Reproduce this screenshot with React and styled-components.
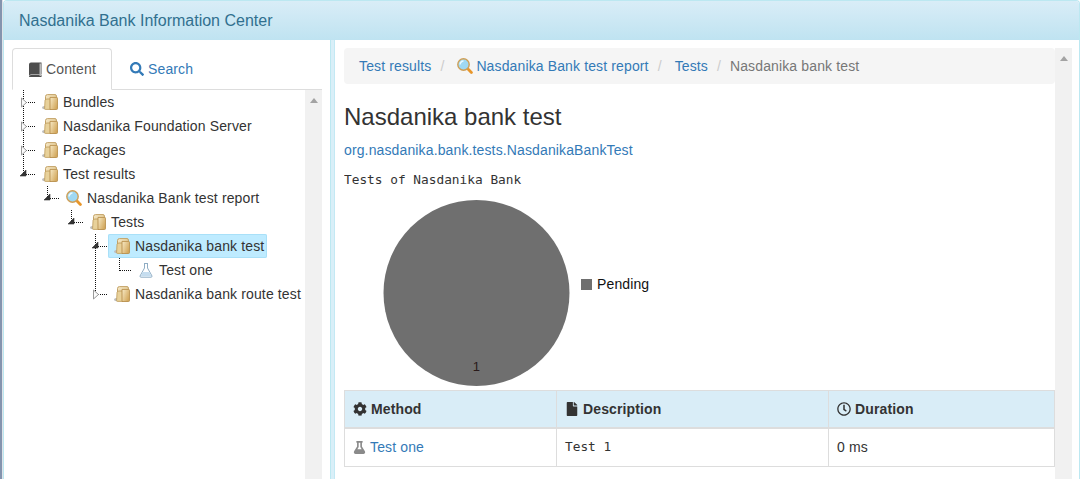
import React from "react";
import styled, { createGlobalStyle } from "styled-components";
import { FaSearch, FaCog, FaFile, FaRegClock, FaFlask } from "react-icons/fa";

const Global = createGlobalStyle`
  html, body { margin: 0; padding: 0; background: #fff; overflow: hidden; }
  * { box-sizing: border-box; }
  body { font-family: "Liberation Sans", Arial, sans-serif; font-size: 14px; line-height: 20px; color: #333; letter-spacing: 0.13px; }
`;

const Page = styled.div`
  width: 1081px; height: 479px; overflow: hidden; display: flex; background: #fff;
`;
const EdgeStrip = styled.div`
  width: 3px; flex: none;
  background: linear-gradient(to right, #8494ae 0, #8494ae 2px, #dfe3e8 2px);
`;
const Frame = styled.div`
  width: 1077px; flex: none; display: flex; flex-direction: column;
  border: 1px solid #bce8f1; border-bottom: 0; border-radius: 4px 4px 0 0; overflow: hidden;
`;
const Header = styled.header`
  height: 39px; flex: none; padding: 0 15px; display: flex; align-items: center;
  font-size: 16px; color: #31708f; letter-spacing: 0;
  background-image: linear-gradient(to bottom, #d9edf7 0, #bfe3f1 100%);
`;
const Body = styled.div`
  flex: 1; display: flex; min-height: 0;
`;
const LeftPane = styled.aside`
  width: 326px; flex: none; padding: 8px 8px 0 8px; display: flex; flex-direction: column;
`;
const Tabs = styled.nav`
  display: flex; height: 42px; flex: none; border-bottom: 1px solid #ddd;
`;
const Tab = styled.div`
  height: 42px; padding: 0 ${p => (p.$active ? "15px" : "18px")};
  display: flex; align-items: center; gap: 4px; font-size: 14px;
  color: ${p => (p.$active ? "#555" : "#337ab7")};
  ${p => p.$active && `
    width: 100px;
    background: #fff; border: 1px solid #ddd; border-bottom-color: #fff; border-radius: 4px 4px 0 0;
  `}
`;
const TreeWrap = styled.div`
  flex: 1; display: flex; min-height: 0;
`;
const Tree = styled.div`
  width: 293px; flex: none; overflow: hidden;
`;
const Scrollbar = styled.div`
  width: 17px; flex: none; background: #f1f1f1; display: flex; justify-content: center; padding-top: 8px;
`;
const ArrowUp = styled.div`
  width: 0; height: 0; border-left: 4px solid transparent; border-right: 4px solid transparent;
  border-bottom: 5px solid #a3a3a3;
`;
const Row = styled.div`
  height: 24px; display: flex; align-items: stretch; white-space: nowrap;
`;
const Cell = styled.svg`
  width: 24px; height: 24px; flex: none; display: block;
`;
const Anchor = styled.div`
  height: 24px; padding: 0 3px 0 6px; display: flex; align-items: center; gap: 5px; color: #333;
  border-radius: 2px;
  ${p => p.$selected && `background: #beebff; box-shadow: inset 0 0 0 1px #a9e0f8;`}
`;
const Splitter = styled.div`
  width: 5px; flex: none; background: #d9eff8; border-left: 1px solid #bce8f1; border-right: 1px solid #c4e9f4;
`;
const MainPane = styled.main`
  flex: 1; min-width: 0; display: flex; padding: 8px 6px 0 9px;
`;
const Content = styled.div`
  width: 711px; flex: none; overflow: hidden;
`;
const Breadcrumb = styled.ol`
  margin: 0 0 20px; padding: 8px 15px 8px 11px; height: 36px; list-style: none; display: flex; align-items: center;
  background: #f5f5f5; border-radius: 4px;
`;
const Crumb = styled.li`
  display: flex; align-items: center; gap: 3px;
  padding-left: ${p => (p.$current ? "0" : "4px")};
  color: ${p => (p.$current ? "#777" : "#337ab7")};
`;
const CrumbSep = styled.li`
  width: 22px; flex: none; padding-left: 9px; color: #ccc;
`;
const Title = styled.h2`
  margin: 0; font-size: 24px; font-weight: 500; line-height: 26px; color: #333; letter-spacing: 0;
`;
const QualifiedName = styled.a`
  display: block; margin-top: 10px; color: #337ab7; line-height: 20px;
`;
const Mono = styled.span`
  font-family: "DejaVu Sans Mono", monospace; font-size: 12.8px; color: #333; letter-spacing: 0;
`;
const Intro = styled.div`
  margin-top: 9px; height: 20px; line-height: 20px;
`;
const ChartRow = styled.div`
  height: 201px; display: flex; align-items: flex-start; padding: 10px 0 0 38px;
`;
const LegendItem = styled.div`
  display: flex; align-items: center; gap: 5px; margin: 75px 0 0 11px; color: #111;
`;
const LegendSwatch = styled.span`
  width: 11px; height: 11px; background: #6f6f6f; display: block;
`;
const Table = styled.table`
  width: 711px; border-collapse: separate; border-spacing: 0; table-layout: fixed; border: 1px solid #ddd;
`;
const Th = styled.th`
  width: ${p => p.$w}px; height: 37px; padding: 8px; text-align: left; font-weight: 700; color: #333;
  background: #d9edf7; border-bottom: 2px solid #ddd; white-space: nowrap;
  & + & { border-left: 1px solid #ddd; }
  svg { vertical-align: -2px; margin-right: 4px; }
`;
const Td = styled.td`
  height: 37px; padding: 7px 8px 9px; color: #333;
  & + & { border-left: 1px solid #ddd; }
`;
const Link = styled.a`
  color: #337ab7; svg { color: #8a8a8a; vertical-align: -2px; margin-right: 4px; }
`;
const Spacer = styled.span`
  width: ${p => p.$n * 24}px; flex: none; display: block;
`;

/* Tree connector for one indentation level */
const Connector = ({ kind, toggle }) => {
  const x = 11.5, y = 12.5;
  const dots = { stroke: "#111", strokeDasharray: "1 1", fill: "none", shapeRendering: "crispEdges" };
  return (
    <Cell viewBox="0 0 24 24">
      {kind === "guide" && <path d={`M${x} 0V24`} {...dots} />}
      {kind === "branch" && <path d={`M${x} 0V24`} {...dots} />}
      {kind === "end" && <path d={`M${x} 0V13`} {...dots} />}
      {(kind === "branch" || kind === "end") && <path d={`M12 ${y}H24`} {...dots} />}
      {toggle === "closed" && <path d="M9.5 8L14.5 12.5L9.5 17Z" fill="#fbfbfb" stroke="#999" strokeLinejoin="miter" />}
      {toggle === "open" && <path d="M14 8L14 14L8 14Z" fill="#333" stroke="#333" strokeWidth="0.6" />}
    </Cell>
  );
};

const FolderIcon = () => (
  <svg width="16" height="16" viewBox="0 0 16 16" style={{ flex: "none" }}>
    <defs>
      <linearGradient id="folderFront" x1="0" y1="0" x2="1" y2="0.6">
        <stop offset="0" stopColor="#f8ebc8" />
        <stop offset="1" stopColor="#d2a75c" />
      </linearGradient>
      <linearGradient id="folderBack" x1="0" y1="0" x2="1" y2="1">
        <stop offset="0" stopColor="#f6e9c8" />
        <stop offset="1" stopColor="#dcbc7e" />
      </linearGradient>
    </defs>
    <ellipse cx="2.4" cy="13.6" rx="2.4" ry="1.6" fill="#bdbdbd" />
    <path d="M3.5 14V2.5Q3.5 0.6 5.5 0.6H13Q14.4 0.6 14.4 2V6H9V14Z" fill="url(#folderBack)" stroke="#bd9a5a" strokeWidth="0.9" />
    <path d="M2.6 14.5L3 6.5Q3.2 5 5 5H8.6V15.4H3.4Q2.6 15.4 2.6 14.5Z" fill="#e8d19a" stroke="#bd9a5a" strokeWidth="0.8" />
    <path d="M8 3.4H14.4Q15.6 3.4 15.6 4.6V14.4Q15.6 15.5 14.4 15.5H8Z" fill="url(#folderFront)" stroke="#b88f4c" strokeWidth="0.9" />
  </svg>
);
const ReportIcon = () => (
  <svg width="16" height="16" viewBox="0 0 16 16" style={{ flex: "none" }}>
    <path d="M11 11L14.4 14.4" stroke="#e8962a" strokeWidth="2.8" strokeLinecap="round" />
    <circle cx="6.5" cy="6.5" r="5.7" fill="#9fd8f2" stroke="#cf9f56" strokeWidth="1.4" />
    <path d="M3.1 6.5A3.4 3.4 0 0 1 6.5 3.1" stroke="#e8f8ff" strokeWidth="1.5" fill="none" />
  </svg>
);
const BeakerIcon = () => (
  <svg width="16" height="16" viewBox="0 0 16 16" style={{ flex: "none" }}>
    <path d="M6 1.5H10M6.5 1.5V6L2 14Q1.8 15.2 3 15.2H13Q14.2 15.2 14 14L9.5 6V1.5" fill="#fff" stroke="#8fadc4" strokeWidth="1" />
    <path d="M4.6 10H11.4L13.4 14.6H2.6Z" fill="#c5ddef" />
  </svg>
);
const BookIcon = () => (
  <svg width="14" height="15" viewBox="0 0 14 15" style={{ flex: "none" }}>
    <path d="M1 2.5Q1 0.5 3 0.5H13.5V12.5H3Q1 12.5 1 14.5Z" fill="#4d4d4d" />
    <path d="M1 14.5Q1 13 3 13H13.5V15H2Q1 15 1 14.5Z" fill="#4d4d4d" />
    <path d="M11.5 1.6H13V14H11.5Z" fill="#b9b9b9" />
  </svg>
);

const TreeRow = ({ guides = [], indent = 0, kind, toggle, icon, selected, children }) => (
  <Row>
    <Spacer $n={indent} />
    {guides.map((g, i) => <Connector key={i} kind="guide" />)}
    <Connector kind={kind} toggle={toggle} />
    <Anchor $selected={selected}>{icon}{children}</Anchor>
  </Row>
);

export default function App() {
  return (
    <Page>
      <Global />
      <EdgeStrip />
      <Frame>
        <Header>Nasdanika Bank Information Center</Header>
        <Body>
          <LeftPane>
            <Tabs>
              <Tab $active><BookIcon /> Content</Tab>
              <Tab><FaSearch size={14} /> Search</Tab>
            </Tabs>
            <TreeWrap>
              <Tree>
                <TreeRow kind="branch" toggle="closed" icon={<FolderIcon />}>Bundles</TreeRow>
                <TreeRow kind="branch" toggle="closed" icon={<FolderIcon />}>Nasdanika Foundation Server</TreeRow>
                <TreeRow kind="branch" toggle="closed" icon={<FolderIcon />}>Packages</TreeRow>
                <TreeRow kind="end" toggle="open" icon={<FolderIcon />}>Test results</TreeRow>
                <TreeRow indent={1} kind="end" toggle="open" icon={<ReportIcon />}>Nasdanika Bank test report</TreeRow>
                <TreeRow indent={2} kind="end" toggle="open" icon={<FolderIcon />}>Tests</TreeRow>
                <TreeRow indent={3} kind="branch" toggle="open" selected icon={<FolderIcon />}>Nasdanika bank test</TreeRow>
                <TreeRow indent={3} guides={[1]} kind="end" icon={<BeakerIcon />}>Test one</TreeRow>
                <TreeRow indent={3} kind="end" toggle="closed" icon={<FolderIcon />}>Nasdanika bank route test</TreeRow>
              </Tree>
              <Scrollbar><ArrowUp /></Scrollbar>
            </TreeWrap>
          </LeftPane>
          <Splitter />
          <MainPane>
            <Content>
              <Breadcrumb>
                <Crumb>Test results</Crumb>
                <CrumbSep>/</CrumbSep>
                <Crumb><ReportIcon />Nasdanika Bank test report</Crumb>
                <CrumbSep>/</CrumbSep>
                <Crumb>Tests</Crumb>
                <CrumbSep>/</CrumbSep>
                <Crumb $current>Nasdanika bank test</Crumb>
              </Breadcrumb>
              <Title>Nasdanika bank test</Title>
              <QualifiedName>org.nasdanika.bank.tests.NasdanikaBankTest</QualifiedName>
              <Intro><Mono>Tests of Nasdanika Bank</Mono></Intro>
              <ChartRow>
                <svg width="188" height="188" viewBox="0 0 188 188" style={{ flex: "none" }}>
                  <circle cx="94.5" cy="94" r="93" fill="#6f6f6f" />
                  <text x="94.5" y="172" textAnchor="middle" fontFamily="Liberation Sans, sans-serif" fontSize="13" fill="#2a1a1a">1</text>
                </svg>
                <LegendItem><LegendSwatch />Pending</LegendItem>
              </ChartRow>
              <Table>
                <thead>
                  <tr>
                    <Th $w={211}><FaCog size={14} />Method</Th>
                    <Th $w={272}><FaFile size={14} />Description</Th>
                    <Th $w={226}><FaRegClock size={14} />Duration</Th>
                  </tr>
                </thead>
                <tbody>
                  <tr>
                    <Td><Link><FaFlask size={13} />Test one</Link></Td>
                    <Td><Mono>Test 1</Mono></Td>
                    <Td>0 ms</Td>
                  </tr>
                </tbody>
              </Table>
            </Content>
            <Scrollbar><ArrowUp /></Scrollbar>
          </MainPane>
        </Body>
      </Frame>
    </Page>
  );
}
